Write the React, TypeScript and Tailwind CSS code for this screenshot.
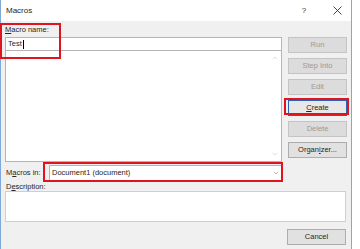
import { ChevronDown, ChevronUp } from "lucide-react";

const font = { fontFamily: '"Liberation Sans", Arial, sans-serif' };

function Btn({ label, u, disabled, focused }: { label: string; u?: number; disabled?: boolean; focused?: boolean }) {
  const text =
    u === undefined ? (
      label
    ) : (
      <>
        {label.slice(0, u)}
        <span className="underline">{label[u]}</span>
        {label.slice(u + 1)}
      </>
    );
  return (
    <div
      className={
        "h-[16px] flex items-center justify-center text-[7.5px] border " +
        (disabled
          ? "bg-[#dcdcdc] border-[#c4c4c4] text-[#9a9a9a]"
          : focused
          ? "bg-[#e8e8e8] border-[#2a62b8] text-[#262626]"
          : "bg-[#e1e1e1] border-[#adadad] text-[#262626]")
      }
    >
      {text}
    </div>
  );
}

export default function App() {
  return (
    <div className="w-[360px] h-[249px] bg-white flex overflow-hidden" style={font}>
      <div className="w-[352px] h-full border-l border-r border-[#7fa9d8] flex flex-col">
        {/* Title bar */}
        <div className="h-[21px] bg-white flex items-center pl-[5px] text-[8px] text-[#262626] shrink-0">
          <span className="flex-1">Macros</span>
          <span className="w-[10px] mr-[14px] text-center text-[8px] text-[#333]">?</span>
          <span className="w-[28px] flex justify-center text-[#333]">
            <svg width="9" height="9" viewBox="0 0 9 9">
              <path d="M0.5 0.5 L8.5 8.5 M8.5 0.5 L0.5 8.5" stroke="#333" strokeWidth="0.9" />
            </svg>
          </span>
        </div>

        {/* Body */}
        <div className="flex-1 bg-[#f0f0f0] relative pl-[4px] pr-[4px] text-[#262626]">
          <div className="flex gap-[6px]">
            <div className="w-[277px] flex flex-col">
              <div className="h-[16px] pt-[4px] text-[7.5px] leading-[10px]">
                <span className="underline">M</span>acro name:
              </div>
              <div className="h-[14px] bg-white border border-[#b5b5b5] flex items-center pl-[2px] text-[7.5px]">
                Test<span className="w-px h-[9px] bg-black ml-px" />
              </div>
              <div className="h-[111px] bg-white border border-t-0 border-[#b5b5b5] flex justify-end">
                <div className="w-[12px] flex flex-col justify-between items-center py-[3px] text-[#c0c0c0]">
                  <ChevronUp size={8} strokeWidth={1.5} />
                  <ChevronDown size={8} strokeWidth={1.5} />
                </div>
              </div>
            </div>
            <div className="w-[59px] flex flex-col gap-[5px] pt-[16px]">
              <Btn label="Run" disabled />
              <Btn label="Step Into" disabled />
              <Btn label="Edit" disabled />
              <Btn label="Create" u={0} focused />
              <Btn label="Delete" disabled />
              <Btn label="Organizer..." u={5} />
            </div>
          </div>

          <div className="flex items-center h-[20px] mt-[1px]">
            <span className="w-[42px] text-[7.5px] pl-[1px]">
              M<span className="underline">a</span>cros in:
            </span>
            <div className="w-[234px] h-[16px] ml-[2px] bg-white border border-[#b5b5b5] flex items-center text-[7.5px]">
              <span className="flex-1 pl-[2px]">Document1 (document)</span>
              <span className="w-[12px] flex justify-center text-[#707070]">
                <ChevronDown size={8} strokeWidth={1.5} />
              </span>
            </div>
          </div>
          <div className="text-[7.5px] leading-[10px] pl-[1px] mt-[-1px]">
            D<span className="underline">e</span>scription:
          </div>
          <div className="h-[31px] mt-[-1px] bg-white border border-[#cfcfcf] mr-[1px]" />
          <div className="flex justify-end mt-[7px] pr-[1px]">
            <div className="w-[59px]">
              <Btn label="Cancel" />
            </div>
          </div>

          {/* Annotation boxes */}
          <div className="absolute left-[-1px] top-[2px] w-[61px] h-[36px] border-2 border-[#e0141e] pointer-events-none" />
          <div className="absolute left-[283px] top-[77px] w-[65px] h-[17px] border-2 border-[#e0141e] pointer-events-none" />
          <div className="absolute left-[42px] top-[141px] w-[240px] h-[20px] border-2 border-[#e0141e] pointer-events-none" />
        </div>
      </div>
    </div>
  );
}
